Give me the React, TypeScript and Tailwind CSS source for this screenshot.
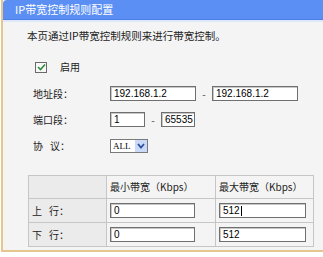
import React from "react";

const cjk = { fontFamily: '"Noto Sans CJK SC", "Liberation Sans", sans-serif' };
const num = { fontFamily: '"Liberation Sans", "Noto Sans CJK SC", sans-serif' };

function Input({ value, w, cursor }: { value: string; w: string; cursor?: boolean }) {
  return (
    <div
      className={`${w} h-[15px] bg-white border border-[#6f6f6f] shadow-[inset_1px_1px_0_#c8c8c8] flex items-center pl-[3px] text-[10px] text-black leading-none`}
      style={num}
    >
      <span>{value}</span>
      {cursor && <span className="w-[1px] h-[10px] bg-black ml-[1px]" />}
    </div>
  );
}

export default function App() {
  return (
    <div className="w-[323px] h-[257px] bg-white overflow-hidden" style={cjk}>
      <div className="ml-[1px] h-[252px] border-l-[2px] border-b-[2px] border-[#e6c68e] bg-[#f4f4f4] flex flex-col">
        <div className="h-[20px] bg-[#5b8ff4] rounded-tl-[4px] flex items-center pl-[12px] text-white text-[11px] leading-none border-b border-[#4c7fe6]">
          IP带宽控制规则配置
        </div>
        <div className="h-[2px] bg-[#dfe8fb]" />
        <div className="pl-[24px] mt-[7px] h-[14px] flex items-center text-[10.5px] text-[#222]">
          本页通过IP带宽控制规则来进行带宽控制。
        </div>
        <div className="mt-[18px] h-[12px] flex items-center pl-[32px]">
          <div className="w-[12px] h-[11px] border border-[#6a6a6a] bg-[#f8f8f8] flex items-center justify-center">
            <svg width="9" height="8" viewBox="0 0 9 8">
              <path d="M1 4 L3.5 6.5 L8 1.5" fill="none" stroke="#2e8b3a" strokeWidth="1.6" />
            </svg>
          </div>
          <span className="ml-[13px] text-[10px] text-[#222] leading-none">启用</span>
        </div>
        <div className="mt-[13px] h-[15px] flex items-center">
          <span className="pl-[30px] w-[107px] text-[10px] text-[#222] leading-none">地址段：</span>
          <Input value="192.168.1.2" w="w-[86px]" />
          <span className="w-[16px] text-center text-[10px] text-[#444]">-</span>
          <Input value="192.168.1.2" w="w-[86px]" />
        </div>
        <div className="mt-[11px] h-[15px] flex items-center">
          <span className="pl-[30px] w-[107px] text-[10px] text-[#222] leading-none">端口段：</span>
          <Input value="1" w="w-[35px]" />
          <span className="w-[16px] text-center text-[10px] text-[#444]">-</span>
          <Input value="65535" w="w-[34px]" />
        </div>
        <div className="mt-[12px] h-[14px] flex items-center">
          <span className="pl-[30px] w-[107px] text-[10px] text-[#222] leading-none">
            协<span className="ml-[7px]">议：</span>
          </span>
          <div className="w-[38px] h-[14px] bg-white border border-[#7a7a7a] flex items-center">
            <span className="pl-[2px] text-[9px] text-black leading-none flex-1" style={{ fontFamily: '"Liberation Serif", serif' }}>ALL</span>
            <div className="w-[12px] h-[12px] bg-[#c9d9f7] flex items-center justify-center">
              <svg width="8" height="6" viewBox="0 0 8 6">
                <path d="M1 1 L4 4.5 L7 1" fill="none" stroke="#2b4f9e" strokeWidth="1.8" />
              </svg>
            </div>
          </div>
        </div>
        <div className="mt-[22px] ml-[25px]">
          <table className="border-collapse text-[10px] text-[#222]">
            <tbody>
              <tr className="h-[23px]">
                <td className="w-[78px] border border-[#c6c6c6] bg-[#ebebeb]"></td>
                <td className="w-[109px] border border-[#c6c6c6] bg-[#f4f4f4] pl-[3px] leading-none">最小带宽（Kbps）</td>
                <td className="w-[98px] border border-[#c6c6c6] bg-[#f4f4f4] pl-[3px] leading-none">最大带宽（Kbps）</td>
              </tr>
              <tr className="h-[24px]">
                <td className="border border-[#c6c6c6] bg-[#ebebeb] pl-[3px] leading-none">
                  上<span className="ml-[7px]">行：</span>
                </td>
                <td className="border border-[#c6c6c6] bg-[#f4f4f4] pl-[3px]"><Input value="0" w="w-[85px]" /></td>
                <td className="border border-[#c6c6c6] bg-[#f4f4f4] pl-[3px]"><Input value="512" w="w-[87px]" cursor /></td>
              </tr>
              <tr className="h-[24px]">
                <td className="border border-[#c6c6c6] bg-[#ebebeb] pl-[3px] leading-none">
                  下<span className="ml-[7px]">行：</span>
                </td>
                <td className="border border-[#c6c6c6] bg-[#f4f4f4] pl-[3px]"><Input value="0" w="w-[85px]" /></td>
                <td className="border border-[#c6c6c6] bg-[#f4f4f4] pl-[3px]"><Input value="512" w="w-[87px]" /></td>
              </tr>
            </tbody>
          </table>
        </div>
      </div>
    </div>
  );
}
